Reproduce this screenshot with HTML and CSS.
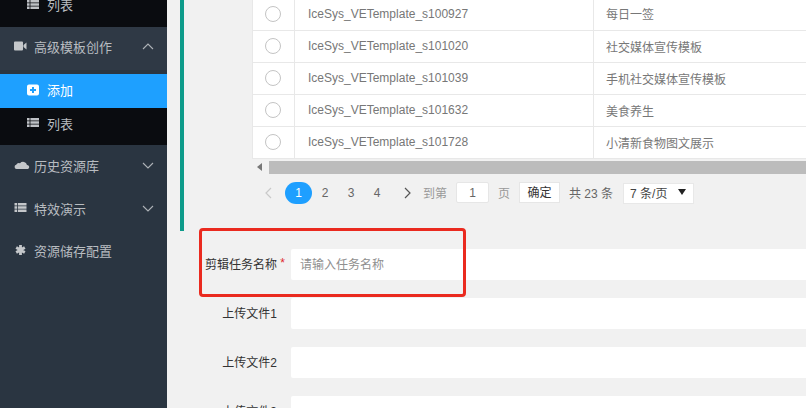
FILE: index.html
```html
<!DOCTYPE html>
<html lang="zh-CN">
<head>
<meta charset="utf-8">
<title>高级模板创作</title>
<link rel="stylesheet" href="styles.css">
</head>
<body>
<div class="app">
  <aside class="sidebar">
    <div class="sub sub-top">
      <a class="sub-item sub-item-first">
        <svg class="ico" viewBox="0 0 12 12"><path d="M0 1h2.600v2.400H0zM3.400 1H12v2.400H3.400zM0 4.300h2.600v2.400H0zM3.400 4.300H12v2.400H3.400zM0 7.600h2.600V10H0zM3.400 7.600H12V10H3.400z" fill="#bfc2c6"/></svg>
        <span>列表</span>
      </a>
    </div>
    <a class="menu menu-open">
      <svg class="ico-main" viewBox="0 0 13 12"><path d="M0 2.500Q0 1.500 1 1.500h7q1 0 1 1v7q0 1-1 1H1q-1 0-1-1z M9.500 5L12.500 2.600v6.800L9.500 7z" fill="#c4c7ca"/></svg>
      <span class="menu-text">高级模板创作</span>
      <svg class="chev" viewBox="0 0 12 7"><path d="M1 6l5-5 5 5" fill="none" stroke="#aeb2b7" stroke-width="1.100"/></svg>
    </a>
    <div class="sub">
      <a class="sub-item active">
        <svg class="ico" viewBox="0 0 12 12"><path fill-rule="evenodd" d="M2 0.500h8a2 2 0 0 1 2 2v7a2 2 0 0 1-2 2H2a2 2 0 0 1-2-2v-7a2 2 0 0 1 2-2zM5 3v2H3v2h2v2h2V7h2V5H7V3z" fill="#fff"/></svg>
        <span>添加</span>
      </a>
      <a class="sub-item sub-item-last">
        <svg class="ico" viewBox="0 0 12 12"><path d="M0 1h2.600v2.400H0zM3.400 1H12v2.400H3.400zM0 4.300h2.600v2.400H0zM3.400 4.300H12v2.400H3.400zM0 7.600h2.600V10H0zM3.400 7.600H12V10H3.400z" fill="#bfc2c6"/></svg>
        <span>列表</span>
      </a>
    </div>
    <a class="menu menu-raise">
      <svg class="ico-main ico-cloud" viewBox="0 0 16 8"><path d="M2.500 8a2.200 2.200 0 0 1-.3-4.300A3 3 0 0 1 6 2.300a4 4 0 0 1 7 1.700A2.100 2.100 0 0 1 14 8z" fill="#c4c7ca"/></svg>
      <span class="menu-text">历史资源库</span>
      <svg class="chev" viewBox="0 0 12 7"><path d="M1 1l5 5 5-5" fill="none" stroke="#aeb2b7" stroke-width="1.100"/></svg>
    </a>
    <a class="menu">
      <svg class="ico-main" viewBox="0 0 12 12"><path d="M0 1h2.600v2.400H0zM3.400 1H12v2.400H3.400zM0 4.300h2.600v2.400H0zM3.400 4.300H12v2.400H3.400zM0 7.600h2.600V10H0zM3.400 7.600H12V10H3.400z" fill="#c4c7ca"/></svg>
      <span class="menu-text">特效演示</span>
      <svg class="chev" viewBox="0 0 12 7"><path d="M1 1l5 5 5-5" fill="none" stroke="#aeb2b7" stroke-width="1.100"/></svg>
    </a>
    <a class="menu">
      <svg class="ico-main ico-star" viewBox="0 0 12 12"><path d="M6 1v10M1.700 3.500l8.600 5M10.300 3.500l-8.600 5" stroke="#c4c7ca" stroke-width="2.800" fill="none"/></svg>
      <span class="menu-text">资源储存配置</span>
    </a>
  </aside>

  <main class="main">
    <section class="panel">
      <div class="table-wrap">
        <table class="table">
          <tbody>
            <tr class="row-first"><td class="c-radio"><i class="radio"></i></td><td class="c-name">IceSys_VETemplate_s100927</td><td class="c-title">每日一签</td></tr>
            <tr><td class="c-radio"><i class="radio"></i></td><td class="c-name">IceSys_VETemplate_s101020</td><td class="c-title">社交媒体宣传模板</td></tr>
            <tr><td class="c-radio"><i class="radio"></i></td><td class="c-name">IceSys_VETemplate_s101039</td><td class="c-title">手机社交媒体宣传模板</td></tr>
            <tr><td class="c-radio"><i class="radio"></i></td><td class="c-name">IceSys_VETemplate_s101632</td><td class="c-title">美食养生</td></tr>
            <tr><td class="c-radio"><i class="radio"></i></td><td class="c-name">IceSys_VETemplate_s101728</td><td class="c-title">小清新食物图文展示</td></tr>
          </tbody>
        </table>
        <div class="scrollbar">
          <span class="scroll-arrow"></span>
          <span class="scroll-thumb"></span>
        </div>
      </div>
      <div class="pager">
        <svg class="pg-arrow" viewBox="0 0 7 12"><path d="M6 1L1 6l5 5" fill="none" stroke="#c9c9c9" stroke-width="1.200"/></svg>
        <span class="pg pg-on">1</span>
        <span class="pg">2</span>
        <span class="pg">3</span>
        <span class="pg">4</span>
        <svg class="pg-arrow pg-next" viewBox="0 0 7 12"><path d="M1 1l5 5-5 5" fill="none" stroke="#555" stroke-width="1.200"/></svg>
        <span class="pg-label">到第</span>
        <span class="pg-input">1</span>
        <span class="pg-label pg-ye">页</span>
        <span class="pg-btn">确定</span>
        <span class="pg-total">共 23 条</span>
        <span class="pg-select">7 条/页<i class="caret"></i></span>
      </div>
    </section>

    <form class="form">
      <div class="mark"></div>
      <div class="field"><label class="label">剪辑任务名称<em class="req">*</em></label><div class="input placeholder">请输入任务名称</div></div>
      <div class="field"><label class="label">上传文件1</label><div class="input"></div></div>
      <div class="field"><label class="label">上传文件2</label><div class="input"></div></div>
      <div class="field"><label class="label">上传文件3</label><div class="input"></div></div>
    </form>
  </main>
</div>
</body>
</html>
```

FILE: styles.css
```css
* { box-sizing: border-box; }
html, body {
  margin: 0;
  height: 408px;
  overflow: hidden;
  background: #f1f1f1;
  font-family: "Liberation Sans", "Noto Sans CJK SC", sans-serif;
  font-size: 12px;
  color: #666;
}
.app { display: flex; height: 408px; overflow: hidden; }

/* sidebar */
.sidebar {
  flex: 0 0 167px;
  width: 167px;
  background: #2a3541;
  color: #b8bcc0;
  font-size: 13px;
}
.sub { background: #0a0c10; }
.sub-top { height: 27px; }
.sub-item {
  display: flex;
  align-items: center;
  gap: 8px;
  height: 37px;
  padding-left: 27px;
}
.sub-item-first { height: 9px; overflow: visible; }
.sub-item-last { padding-bottom: 7px; }
.ico { width: 12px; height: 12px; flex: none; }
.sub-item.active {
  height: 34px;
  background: #1ea0ff;
  color: #fff;
  margin-top: 4px;
  padding-bottom: 3px;
}
.menu {
  display: flex;
  align-items: center;
  height: 42px;
  padding-left: 14px;
  padding-right: 14px;
}
.menu-open { height: 43px; padding-bottom: 5px; background: #2f3945; }
.menu-raise { padding-bottom: 2px; }
.ico-main { width: 13px; height: 12px; flex: none; }
.ico-cloud { width: 16px; height: 8px; margin-right: -3px; }
.menu-text { margin-left: 7px; flex: 1; white-space: nowrap; }
.chev { width: 12px; height: 7px; flex: none; margin-right: -1px; }

/* main */
.main { flex: 1; min-width: 0; padding-left: 13px; }
.panel {
  height: 231px;
  border-left: 4px solid #0d9b8a;
  padding-left: 68px;
}
.table-wrap { width: 1000px; background: #fff; }
.table {
  border-collapse: collapse;
  table-layout: fixed;
  width: 1000px;
  background: #fff;
  color: #777;
}
.table td {
  height: 32px;
  border: 1px solid #e8e8e8;
  padding: 0;
  vertical-align: middle;
}
.table tr:first-child td { border-top: 0; }
.table .row-first td { height: 30px; padding-bottom: 2px; }
.table .c-radio { width: 42px; padding-right: 2px; text-align: center; }
.table .c-name { width: 299px; padding-left: 13px; }
.table .c-title { padding-left: 12px; }
.radio {
  display: inline-block;
  width: 16px;
  height: 16px;
  border: 1px solid #c4c4c4;
  border-radius: 50%;
  vertical-align: middle;
}
.scrollbar {
  display: flex;
  align-items: center;
  height: 17px;
  background: #f1f1f1;
  padding-left: 5px;
}
.scroll-arrow {
  width: 0;
  height: 0;
  border: 4px solid transparent;
  border-left: 0;
  border-right: 5px solid #777;
}
.scroll-thumb { margin-left: 7px; height: 13px; flex: 1; background: #bcbcbc; }

/* pagination */
.pager {
  display: flex;
  align-items: center;
  height: 22px;
  margin-top: 6px;
  color: #666;
}
.pg-arrow { width: 7px; height: 12px; margin-left: 13px; margin-right: 13px; flex: none; }
.pg-next { margin-left: 14px; margin-right: 12px; }
.pg { width: 26px; text-align: center; }
.pg-on {
  width: 27px;
  height: 22px;
  line-height: 22px;
  border-radius: 11px;
  background: #1e9fff;
  color: #fff;
}
.pg-label { color: #999; white-space: nowrap; }
.pg-input {
  align-self: flex-start;
  width: 33px;
  height: 21px;
  line-height: 20px;
  margin-left: 9px;
  background: #fff;
  border: 1px solid #e6e6e6;
  border-radius: 2px;
  text-align: center;
}
.pg-ye { margin-left: 9px; }
.pg-btn {
  align-self: flex-start;
  width: 41px;
  height: 21px;
  line-height: 20px;
  margin-left: 9px;
  background: #fff;
  border: 1px solid #e6e6e6;
  color: #333;
  text-align: center;
}
.pg-total { margin-left: 9px; white-space: nowrap; }
.pg-select {
  position: relative;
  width: 71px;
  height: 21px;
  line-height: 21px;
  margin-left: 10px;
  margin-top: 1px;
  padding-left: 6px;
  background: #fff;
  border: 1px solid #e8e8e8;
  color: #444;
  white-space: nowrap;
}
.caret {
  position: absolute;
  right: 7px;
  top: 5px;
  width: 0;
  height: 0;
  border: 4px solid transparent;
  border-top: 6px solid #222;
  border-bottom: 0;
}

/* form */
.form {
  position: relative;
  padding-top: 18px;
}
.mark {
  position: absolute;
  left: 19px;
  top: -3px;
  width: 267px;
  height: 69px;
  border: 3px solid #ea2a1f;
  border-radius: 4px;
  pointer-events: none;
}
.field { display: flex; align-items: center; height: 31px; margin-bottom: 18px; }
.label {
  flex: 0 0 111px;
  width: 111px;
  text-align: right;
  padding-right: 14px;
  padding-bottom: 2px;
  color: #333;
  white-space: nowrap;
  position: relative;
}
.req {
  position: absolute;
  right: 6px;
  top: 1px;
  font-style: normal;
  color: #e0282e;
}
.input {
  flex: 1;
  height: 31px;
  line-height: 31px;
  padding-left: 9px;
  padding-top: 1px;
  background: #fff;
  border-radius: 2px 0 0 2px;
}
.placeholder { color: #8f8f8f; }
```
